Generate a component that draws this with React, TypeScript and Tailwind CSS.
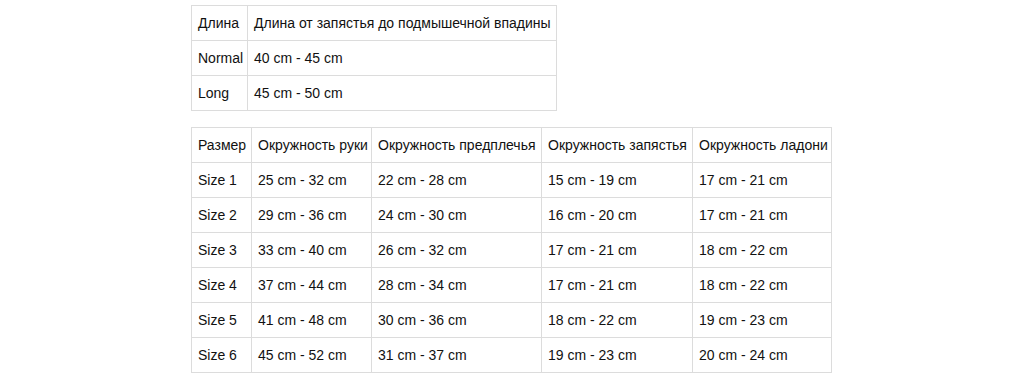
const lengthRows = [
  ['Длина', 'Длина от запястья до подмышечной впадины'],
  ['Normal', '40 cm - 45 cm'],
  ['Long', '45 cm - 50 cm'],
]

const sizeRows = [
  ['Размер', 'Окружность руки', 'Окружность предплечья', 'Окружность запястья', 'Окружность ладони'],
  ['Size 1', '25 cm - 32 cm', '22 cm - 28 cm', '15 cm - 19 cm', '17 cm - 21 cm'],
  ['Size 2', '29 cm - 36 cm', '24 cm - 30 cm', '16 cm - 20 cm', '17 cm - 21 cm'],
  ['Size 3', '33 cm - 40 cm', '26 cm - 32 cm', '17 cm - 21 cm', '18 cm - 22 cm'],
  ['Size 4', '37 cm - 44 cm', '28 cm - 34 cm', '17 cm - 21 cm', '18 cm - 22 cm'],
  ['Size 5', '41 cm - 48 cm', '30 cm - 36 cm', '18 cm - 22 cm', '19 cm - 23 cm'],
  ['Size 6', '45 cm - 52 cm', '31 cm - 37 cm', '19 cm - 23 cm', '20 cm - 24 cm'],
]

function Table({ rows, widths, width }: { rows: string[][]; widths: string[]; width: string }) {
  return (
    <table className={`border-collapse table-fixed text-[14px] text-[#111] ${width}`}>
      <colgroup>
        {widths.map((w, i) => (
          <col key={i} className={w} />
        ))}
      </colgroup>
      <tbody>
        {rows.map((row, r) => (
          <tr key={r} className="h-[35px]">
            {row.map((cell, c) => (
              <td key={c} className="border border-[#dcdcdc] px-[6px] whitespace-nowrap align-middle">
                {cell}
              </td>
            ))}
          </tr>
        ))}
      </tbody>
    </table>
  )
}

export default function App() {
  return (
    <div className="min-h-[381px] bg-white pt-[5px] pl-[191px] font-['Liberation_Sans',Arial,sans-serif]">
      <div className="flex flex-col items-start gap-[16px]">
        <Table rows={lengthRows} widths={['w-[56px]', 'w-[309px]']} width="w-[366px]" />
        <Table
          rows={sizeRows}
          widths={['w-[60px]', 'w-[120px]', 'w-[170px]', 'w-[151px]', 'w-[139px]']}
          width="w-[641px]"
        />
      </div>
    </div>
  )
}
